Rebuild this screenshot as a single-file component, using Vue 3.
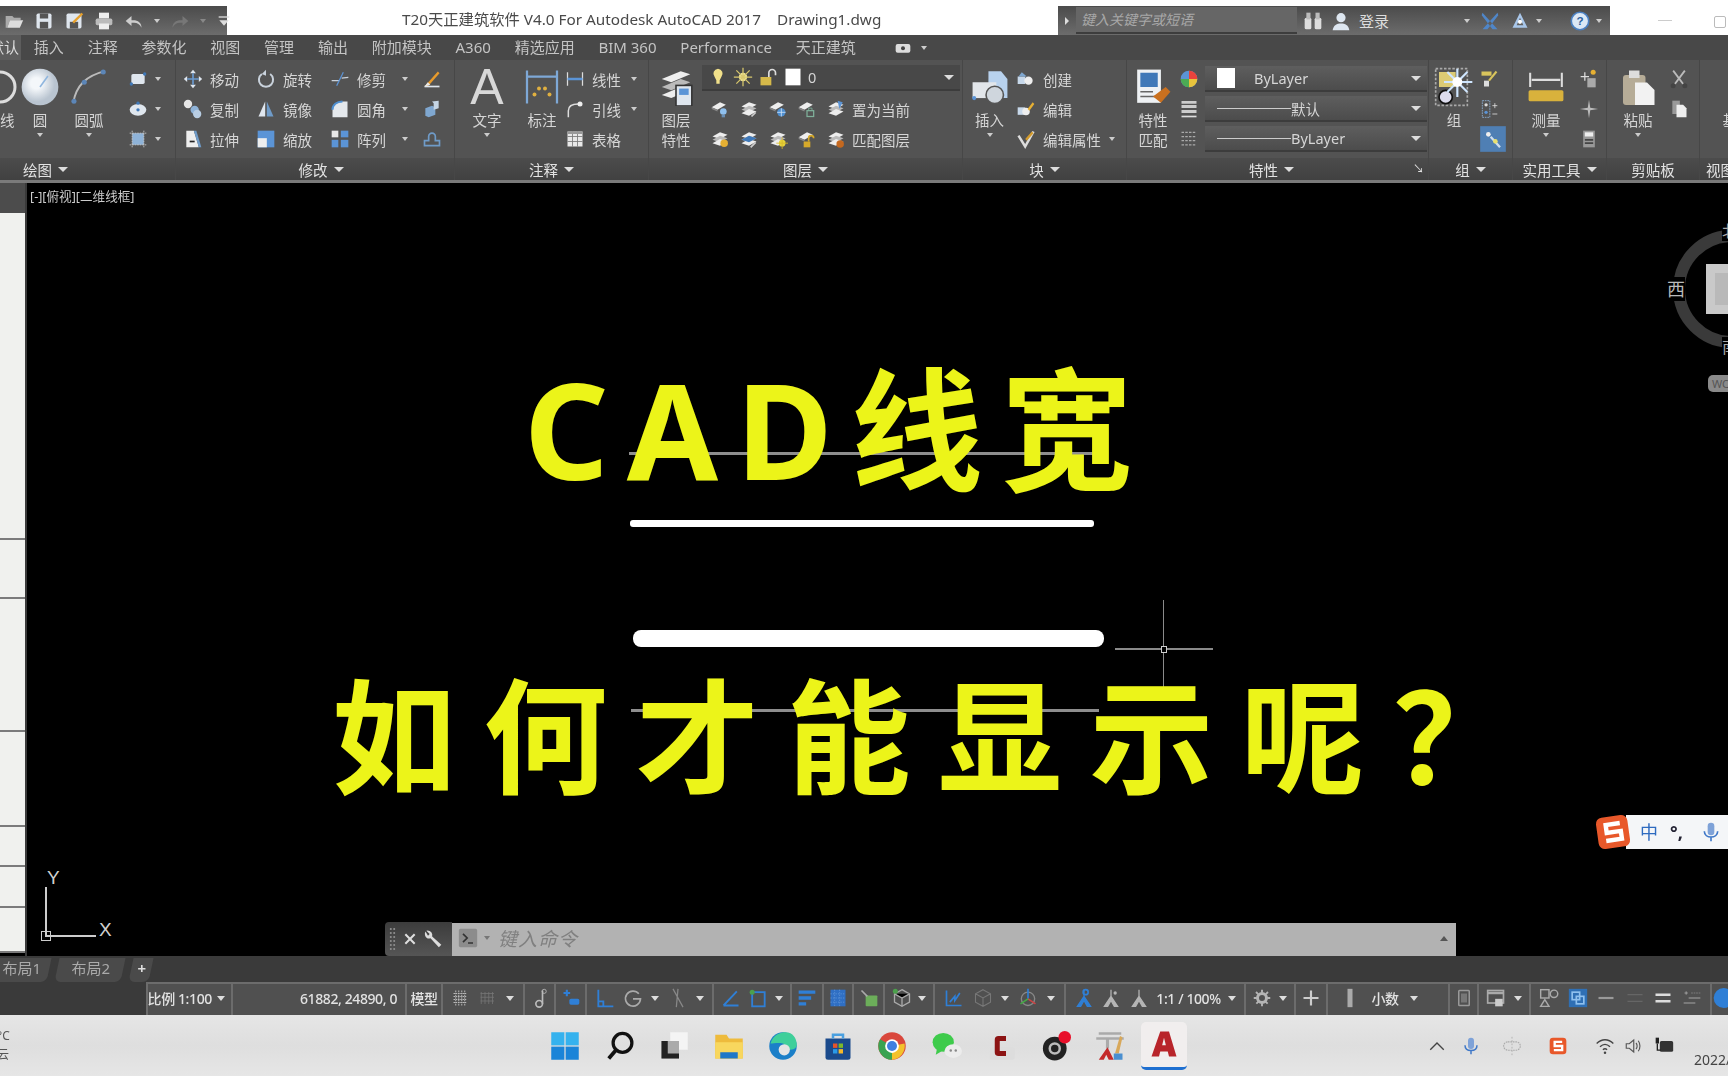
<script setup>
// shared svg fragments, all on a 24x24 box
const stack = '<path d="M3 9l9-5 9 3-9 5z" fill="#eee"/><path d="M3 13l9-5 9 3-9 5z" fill="#bbb"/><path d="M3 17l9-5 9 3-9 5z" fill="#eee"/>'
const plate = '<path d="M2 10l10-6 7 3-10 6z" fill="#eee"/><path d="M2 10l7 3v2l-7-3z" fill="#888"/>'
const icons = {
  ring: '<circle cx="12" cy="12" r="10" fill="none" stroke="#ddd" stroke-width="2"/>',
  circle: '<defs><radialGradient id="cg" cx=".4" cy=".4"><stop offset=".3" stop-color="#f4f7fa"/><stop offset="1" stop-color="#b9c4d0"/></radialGradient></defs><circle cx="12" cy="12" r="11.6" fill="url(#cg)"/><path d="M12 12l5-7" stroke="#8fb6de" stroke-width="1"/>',
  arc: '<path d="M2 22C4 11 10 5 22 2" fill="none" stroke="#bbb" stroke-width="1.2"/><circle cx="2.500" cy="21" r="1.600" fill="#5c86b8"/><circle cx="9" cy="9" r="1.600" fill="#5c86b8"/><circle cx="21" cy="2.500" r="1.600" fill="#5c86b8"/>',
  rect: '<rect x="4" y="6" width="16" height="12" rx="2" fill="#dfe6ee"/><circle cx="4" cy="18" r="2" fill="#3f78b8"/><circle cx="20" cy="6" r="2" fill="#3f78b8"/>',
  ellipse: '<ellipse cx="12" cy="13" rx="10" ry="7" fill="#dfe6ee"/><circle cx="12" cy="13" r="2" fill="#3f78b8"/><circle cx="12" cy="5" r="2" fill="#3f78b8"/>',
  hatch: '<rect x="5" y="5" width="14" height="14" fill="#8fb3d8"/><path d="M2 5h20M2 19h20M5 2v20M19 2v20" stroke="#ccc" stroke-dasharray="2 1"/>',
  move: '<path d="M12 1l3.500 4h-7zM12 23l3.500-4h-7zM1 12l4-3.500v7zM23 12l-4-3.500v7z" fill="#dfe6ee"/><path d="M12 5v14M5 12h14" stroke="#6a9ad0" stroke-width="2"/>',
  rotate: '<path d="M17 6a8.500 8.500 0 1 1-10 0" fill="none" stroke="#c9d2dc" stroke-width="2.400"/><path d="M12 1l-5 5 5 2z" fill="#c9d2dc"/>',
  trim: '<path d="M2 14h9M14 11l8-1" stroke="#c9d2dc" stroke-width="1.500"/><path d="M8 20l8-16" stroke="#5b94d6" stroke-width="1.500"/>',
  erase: '<path d="M3 21L19 3l2 2L7 21z" fill="#e89b2c"/><path d="M3 21h18" stroke="#dfe6ee" stroke-width="2"/><path d="M3 21l4-5 3 3z" fill="#e9e9e9"/>',
  copy: '<circle cx="6" cy="6" r="5" fill="#e6e6e6"/><circle cx="14" cy="13" r="5" fill="#8fb3d8"/><circle cx="17" cy="18" r="5" fill="#b8cde3"/>',
  mirror: '<path d="M11 3v18H3z" fill="#dfe6ee"/><path d="M13 3v18h8z" fill="#6f9bc8"/>',
  fillet: '<path d="M3 22V13C3 7 8 3 15 3h6v19z" fill="#e4e8ec"/><path d="M3 13C3 7 8 3 15 3" fill="none" stroke="#4f8fd0" stroke-width="2.500"/>',
  solid: '<path d="M4 11l8-3 4 2v9l-8 3-4-2z" fill="#7fa7d0"/><path d="M12 3l8-1v9l-6 2V5z" fill="#c6d6e6"/>',
  stretch: '<path d="M4 2h9l6 20H4z" fill="#eee"/><path d="M13 2l6 20h3L16 2z" fill="#6f9bc8"/><path d="M8 15h6" stroke="#222" stroke-width="2"/>',
  scale: '<rect x="2" y="2" width="20" height="20" fill="#5b94d6"/><rect x="2" y="11" width="11" height="11" fill="#eee"/>',
  array: '<rect x="2" y="2" width="8" height="8" fill="#e8e8e8"/><rect x="13" y="2" width="9" height="8" fill="#5b94d6"/><rect x="2" y="13" width="8" height="9" fill="#5b94d6"/><rect x="13" y="13" width="9" height="9" fill="#5b94d6"/>',
  offset: '<path d="M3 20v-6h5V9a4 4 0 0 1 8 0v5h5v6z" fill="none" stroke="#6f9bc8" stroke-width="2"/>',
  dim: '<path d="M2 1v22M22 1v22M2 5h20" stroke="#7ea8d6" stroke-width="1.500"/><circle cx="7" cy="17" r="1.300" fill="#e0b040"/><circle cx="10" cy="13" r="1.300" fill="#e0b040"/><circle cx="14" cy="13" r="1.300" fill="#e0b040"/><circle cx="17" cy="17" r="1.300" fill="#e0b040"/>',
  linear: '<path d="M3 4v16M21 4v16" stroke="#ddd" stroke-width="1.500"/><path d="M3 12h18" stroke="#5b94d6" stroke-width="3"/>',
  leader: '<path d="M4 22V14C4 8 10 6 16 6" fill="none" stroke="#ddd" stroke-width="1.800"/><circle cx="18" cy="6" r="3" fill="#eee"/>',
  table: '<rect x="3" y="3" width="18" height="18" fill="#e8e8e8"/><path d="M3 9h18M3 15h18M9 3v18M15 3v18" stroke="#777"/><rect x="3" y="3" width="18" height="3" fill="#999"/>',
  layers: '<path d="M3 7l12-5 6 2-12 5z" fill="#eee"/><path d="M3 12l12-5 6 2-12 5z" fill="#bbb"/><path d="M3 17l12-5 6 2-12 5z" fill="#eee"/><rect x="12" y="11" width="10" height="13" fill="#dfe6ee" stroke="#333"/><rect x="14" y="13" width="6" height="4" fill="#5b94d6"/>',
  bulb: '<path d="M12 2a6 6 0 0 1 4 10l-2 4v4h-4v-4l-2-4A6 6 0 0 1 12 2z" fill="#f1e08a"/>',
  sun: '<circle cx="12" cy="12" r="5" fill="#efe49a"/><path d="M12 1v22M1 12h22M4 4l16 16M20 4L4 20" stroke="#d8c76c" stroke-width="1.500"/>',
  lock: '<rect x="3" y="12" width="13" height="10" fill="#d6b94a"/><path d="M13 12V7a4 4 0 0 1 8 0v3" fill="none" stroke="#ddd" stroke-width="2"/>',
  swatch: '<rect x="3" y="2" width="18" height="20" fill="#fff"/>',
  l1: plate + '<circle cx="16" cy="15" r="4" fill="#8fc0ee"/><rect x="14" y="19" width="4" height="3" fill="#6a8fb5"/>',
  l2: stack + '<path d="M15 21l5-5" stroke="#ccc" stroke-width="2"/>',
  l3: plate + '<circle cx="16" cy="16" r="5" fill="#4f8fd0"/><path d="M11 16h10M16 11v10" stroke="#cfe2f5"/>',
  l4: plate + '<rect x="12" y="14" width="8" height="7" fill="none" stroke="#7fb09a" stroke-width="1.500"/><path d="M14 14v-3h4v3" fill="none" stroke="#7fb09a"/>',
  l5: stack + '<path d="M14 2l6 2-4 8z" fill="#5b94d6"/>',
  l6: stack + '<circle cx="17" cy="17" r="4.500" fill="#e6b033"/>',
  l7: stack + '<path d="M14 22l6-6" stroke="#ccc" stroke-width="2"/><path d="M3 13l9-5 9 3-9 5z" fill="#3f78b8"/>',
  l8: stack + '<circle cx="17" cy="17" r="4" fill="#e6d33a"/><path d="M17 10v14M10 17h14" stroke="#d6b92a"/>',
  l9: plate + '<rect x="8" y="15" width="8" height="7" fill="#d6a92a"/><path d="M14 15v-4a3 3 0 0 1 6 0" fill="none" stroke="#d6a92a" stroke-width="2"/>',
  l10: stack + '<circle cx="17" cy="18" r="4.500" fill="#c4681f"/>',
  insert: '<path d="M11 2h8l4 5v12h-12z" fill="#b8d2ee"/><rect x="1" y="9" width="15" height="10" fill="#e2e6ea"/><circle cx="15" cy="17" r="5.500" fill="#cfd6dd" stroke="#555"/><circle cx="2" cy="19" r="1.300" fill="#5b94d6"/>',
  create: '<rect x="2" y="9" width="9" height="9" fill="#c7d8ea"/><circle cx="15" cy="14" r="5" fill="#eee"/><path d="M7 4l6 5H3z" fill="#7fa7d0"/>',
  edit: '<rect x="2" y="10" width="9" height="9" fill="#c7d8ea"/><circle cx="12" cy="15" r="4.500" fill="#eee"/><path d="M14 12l6-8 2 2-6 8z" fill="#e6b033"/>',
  attr: '<path d="M3 8l8 13L21 3" fill="none" stroke="#ddd" stroke-width="3"/><path d="M11 12l8-9 2 2-8 9z" fill="#d29a2c"/>',
  match: '<rect x="2" y="1" width="15" height="21" fill="#eef1f4"/><rect x="4" y="3" width="11" height="9" fill="#3f78b8"/><path d="M4 15h8M4 18h10" stroke="#666"/><path d="M12 18l8-6 3 3-6 7z" fill="#c9701f"/>',
  wheel: '<circle cx="12" cy="12" r="10" fill="#5b94d6"/><path d="M12 12V2a10 10 0 0 1 10 10z" fill="#e8433c"/><path d="M12 12h10a10 10 0 0 1-10 10z" fill="#e8c33c"/><path d="M12 12v10A10 10 0 0 1 2 12z" fill="#4cab54"/>',
  lw: '<path d="M3 4h18M3 9h18M3 15h18" stroke="#ccc" stroke-width="3.500"/><path d="M3 21h18" stroke="#ddd" stroke-width="2"/>',
  lt: '<path d="M3 4h18M3 9h18M3 14h18M3 19h18" stroke="#aaa" stroke-width="1.500" stroke-dasharray="3 1.500"/>',
  group: '<rect x="1" y="1" width="19" height="22" fill="none" stroke="#aaa" stroke-dasharray="1.500 1"/><rect x="3" y="3" width="10" height="9" fill="#dccb74"/><circle cx="7" cy="18" r="4" fill="#dde" stroke="#111"/><path d="M14 1v17M6 9h17M8 3l12 12M20 3L8 15" stroke="#cfe6ff" stroke-width="1.300"/><circle cx="14" cy="9" r="3" fill="#fff"/>',
  gedit: '<rect x="3" y="3" width="12" height="5" fill="#d8c45c"/><rect x="6" y="14" width="6" height="7" fill="#ddd"/><path d="M12 14l9-11" stroke="#d8c45c" stroke-width="2.500"/>',
  gsel: '<rect x="4" y="2" width="9" height="20" fill="none" stroke="#8fb3d8" stroke-dasharray="2 1"/><circle cx="8.500" cy="7" r="2" fill="#ddd"/><circle cx="8.500" cy="16" r="2" fill="#5b94d6"/><path d="M16 8h6M19 5v6M16 18h6" stroke="#ddd"/>',
  gbox: '<rect x="1" y="1" width="22" height="22" fill="#4f7fb4"/><circle cx="8" cy="8" r="2" fill="#eee"/><path d="M10 10l8 9" stroke="#cde" stroke-width="2"/><circle cx="14" cy="14" r="2" fill="#e8e070"/>',
  measure: '<path d="M2 3v9M22 3v9M3 7.500h18" stroke="#ddd" stroke-width="1.300"/><rect x="1" y="14" width="22" height="7" rx="1" fill="#d9b23c"/>',
  point: '<path d="M2 9h10M7 4v10" stroke="#ddd" stroke-width="1.500"/><rect x="10" y="11" width="10" height="11" fill="#aaa"/><circle cx="17" cy="4" r="3" fill="#e6b033"/>',
  spark: '<path d="M12 1l1.500 9.500L23 12l-9.500 1.500L12 23l-1.500-9.500L1 12l9.500-1.500z" fill="#bbb"/>',
  calc: '<rect x="5" y="2" width="14" height="20" fill="#999"/><rect x="7" y="4" width="10" height="5" fill="#eee"/><path d="M7 13h10M7 17h10" stroke="#444" stroke-width="2"/>',
  paste: '<rect x="2" y="4" width="15" height="20" rx="2" fill="#b6ac97"/><rect x="6" y="1" width="7" height="5" fill="#ddd"/><path d="M10 9h8l5 5v10H10z" fill="#f2f2f2"/>',
  cut: '<path d="M5 2l12 16M19 2L7 18" stroke="#bbb" stroke-width="2.200"/><circle cx="5" cy="20" r="3" fill="#444"/><circle cx="19" cy="20" r="3" fill="#444"/>',
  clip: '<path d="M4 2h9v16H4z" fill="#999"/><path d="M9 7h8l4 4v11H9z" fill="#eee"/>',
  view: '<rect x="6" y="2" width="18" height="20" fill="#eee"/>',
  open: '<path d="M2 6h8l2 2h8v3H7l-3 9H2z" fill="#aaa"/><path d="M7 11h16l-4 9H4z" fill="#ddd"/>',
  save: '<rect x="3" y="3" width="18" height="18" rx="2" fill="#dfe6ee"/><rect x="7" y="3" width="10" height="6" fill="#555"/><rect x="7" y="13" width="10" height="8" fill="#555"/>',
  saveas: '<rect x="3" y="3" width="18" height="18" rx="2" fill="#dfe6ee"/><rect x="7" y="13" width="10" height="8" fill="#555"/><path d="M10 13L21 2l2 2-11 11z" fill="#e6a02c"/>',
  print: '<rect x="6" y="2" width="12" height="7" fill="#eee"/><rect x="2" y="9" width="20" height="8" rx="2" fill="#bbb"/><rect x="6" y="15" width="12" height="7" fill="#eee"/>',
  undo: '<path d="M21 20c0-6-4-9-10-9H9V6L2 12l7 6v-4h3c4 0 7 2 9 6z" fill="#ccc"/>',
  redo: '<path d="M3 20c0-6 4-9 10-9h2V6l7 6-7 6v-4h-3c-4 0-7 2-9 6z" fill="#777"/>',
  more: '<path d="M4 6h16" stroke="#ddd" stroke-width="2"/><path d="M5 11h14l-7 8z" fill="#ddd"/>',
  binoc: '<rect x="2" y="8" width="8" height="14" rx="2" fill="#ddd"/><rect x="14" y="8" width="8" height="14" rx="2" fill="#ddd"/><rect x="4" y="2" width="5" height="8" fill="#bbb"/><rect x="15" y="2" width="5" height="8" fill="#bbb"/>',
  user: '<circle cx="12" cy="8" r="5.500" fill="#dde6f0"/><path d="M2 23c1-6 5-8 10-8s9 2 10 8z" fill="#dde6f0"/>',
  xchange: '<path d="M3 2l18 20h-6L2 5zM21 2L3 22h6L22 5z" fill="#4f86c8"/>',
  a360: '<path d="M12 2L3 20h18zM12 8l-4 9h8z" fill-rule="evenodd" fill="#a9c7ea"/><circle cx="12" cy="13" r="2.500" fill="#fff"/>',
  help: '<circle cx="12" cy="12" r="10.500" fill="#dbe8f6" stroke="#4a7fc0" stroke-width="2"/><text x="12" y="17" font-size="14" font-weight="700" text-anchor="middle" fill="#2c5f9e" font-family="Liberation Sans">?</text>',
  cam: '<rect x="1" y="6" width="22" height="13" rx="3" fill="#ddd"/><circle cx="12" cy="12.500" r="3" fill="#444"/>',
  term: '<rect x="1" y="1" width="22" height="22" rx="2" fill="#8c8c8c"/><path d="M6 7l5 5-5 5M12 18h6" fill="none" stroke="#333" stroke-width="2"/>',
  wrench: '<path d="M3 3a6 6 0 0 0 2 8 6 6 0 0 0 4 0l10 11 3-3L11 9a6 6 0 0 0-1-5A6 6 0 0 0 4 2l4 4-2 2z" fill="#ddd"/>',
  close: '<path d="M4 4l16 16M20 4L4 20" stroke="#ddd" stroke-width="3.500"/>',
  // status bar
  sgrid: '<path d="M5 2v20M9 2v20M13 2v20M17 2v20M2 6h18M2 10h18M2 14h18M2 18h18" stroke="#bbb" stroke-width="1.300" stroke-dasharray="2 1"/>',
  sdots: '<path d="M3 4v16M8 4v16M13 4v16M18 4v16M2 6h18M2 11h18M2 16h18" stroke="#777" stroke-width="1"/>',
  snote: '<path d="M15 3v16" stroke="#bbb" stroke-width="2"/><circle cx="11" cy="19" r="4" fill="none" stroke="#bbb" stroke-width="2"/><circle cx="17" cy="4" r="2.500" fill="none" stroke="#bbb"/>',
  sinfer: '<rect x="10" y="13" width="12" height="7" rx="2" fill="#2f7fd6"/><path d="M3 6h8M7 2v8" stroke="#2f7fd6" stroke-width="2.500"/>',
  sortho: '<path d="M4 2v20h18M4 16h6v6" fill="none" stroke="#2f7fd6" stroke-width="2.200"/>',
  spolar: '<path d="M19 7a9 9 0 1 0 2 6h-9" fill="none" stroke="#aaa" stroke-width="2"/>',
  scross: '<path d="M6 1l12 22M12 1l-2 22" stroke="#888" stroke-width="1.500"/>',
  sangle: '<path d="M3 21h18M3 21L19 4" fill="none" stroke="#2f7fd6" stroke-width="2.200"/>',
  srect: '<rect x="5" y="5" width="15" height="17" fill="none" stroke="#2f7fd6" stroke-width="2.200"/><circle cx="5" cy="5" r="3" fill="#4ca04c"/>',
  slines: '<path d="M2 5h20M2 12h15M2 19h9" stroke="#2f7fd6" stroke-width="4"/>',
  shatch: '<rect x="3" y="2" width="18" height="20" fill="#2f6fc4"/><path d="M3 7h18M3 12h18M3 17h18M8 2v20M14 2v20" stroke="#5f95d8" stroke-dasharray="1.500 1.500"/>',
  sgreen: '<rect x="8" y="9" width="14" height="13" rx="1" fill="#6cae5a"/><path d="M3 3l7 7" stroke="#aaa" stroke-width="2"/>',
  s3d: '<path d="M12 2l9 5v10l-9 5-9-5V7z" fill="none" stroke="#aaa" stroke-width="1.600"/><path d="M3 7l9 5 9-5M12 12v10" stroke="#aaa" stroke-width="1.600"/><circle cx="4" cy="4" r="3" fill="#4ca04c"/>',
  saxis: '<path d="M3 3v18h18" fill="none" stroke="#2f7fd6" stroke-width="2"/><path d="M7 17l6-7v5l6-9" fill="none" stroke="#2f7fd6" stroke-width="2"/>',
  scube: '<path d="M12 2l9 5v10l-9 5-9-5V7zM3 7l9 5 9-5M12 12v10" fill="none" stroke="#777" stroke-width="1.300"/>',
  sgizmo: '<circle cx="12" cy="13" r="8" fill="none" stroke="#888" stroke-width="1.600"/><path d="M12 13V1" stroke="#2f7fd6" stroke-width="2"/><path d="M12 13l9 6" stroke="#c44" stroke-width="2"/><path d="M12 13l-9 6" stroke="#4a4" stroke-width="2"/>',
  sman: '<path d="M12 10L4 22h4l4-7 4 7h4zM12 2v9" fill="#2f7fd6" stroke="#2f7fd6" stroke-width="1.500"/><circle cx="14" cy="5" r="3" fill="none" stroke="#2f7fd6" stroke-width="2"/>',
  sman2: '<path d="M12 10L4 22h4l4-7 4 7h4zM12 2v9" fill="#b5b5b5" stroke="#b5b5b5" stroke-width="1.500"/><circle cx="17" cy="6" r="2" fill="#b5b5b5"/>',
  sman3: '<path d="M12 10L4 22h4l4-7 4 7h4zM12 2v9" fill="#b5b5b5" stroke="#b5b5b5" stroke-width="1.500"/>',
  sgear: '<circle cx="12" cy="12" r="6" fill="none" stroke="#b5b5b5" stroke-width="4"/><path d="M12 1v22M1 12h22M4 4l16 16M20 4L4 20" stroke="#b5b5b5" stroke-width="2.500" stroke-dasharray="4 14"/>',
  splus: '<path d="M12 3v18M3 12h18" stroke="#ccc" stroke-width="2.600"/>',
  sbar: '<rect x="9" y="1" width="6" height="22" fill="#aaa"/>',
  scalc: '<rect x="5" y="2" width="14" height="20" rx="1" fill="none" stroke="#999" stroke-width="2"/><rect x="8" y="6" width="8" height="12" fill="#777"/>',
  sscreen: '<rect x="2" y="3" width="19" height="15" fill="none" stroke="#aaa" stroke-width="2"/><path d="M2 6h19" stroke="#aaa" stroke-width="3"/><rect x="11" y="13" width="9" height="9" fill="#ccc"/>',
  sshape: '<rect x="2" y="2" width="10" height="10" fill="none" stroke="#aaa" stroke-width="1.700"/><circle cx="18" cy="7" r="4.500" fill="none" stroke="#aaa" stroke-width="1.700"/><path d="M7 14l5 8H2z" fill="none" stroke="#aaa" stroke-width="1.700"/>',
  sblue: '<rect x="1" y="1" width="22" height="22" fill="#2f6fb4"/><rect x="5" y="5" width="9" height="9" fill="none" stroke="#8fc0ee" stroke-width="2"/><rect x="10" y="10" width="9" height="9" fill="none" stroke="#8fc0ee" stroke-width="2"/>',
  seq: '<path d="M3 12h18" stroke="#999" stroke-width="2.600"/>',
  seq2: '<path d="M3 8h18M3 16h18" stroke="#666" stroke-width="1.600"/>',
  seq3: '<path d="M3 8h18M3 16h18" stroke="#ddd" stroke-width="3"/>',
  slist: '<path d="M8 12h14M2 18h14" stroke="#888" stroke-width="2"/><path d="M3 6h4M5 4v4" stroke="#aaa"/><path d="M11 6h11" stroke="#888" stroke-dasharray="2 1"/>',
  sround: '<circle cx="14" cy="12" r="12" fill="#2f7fd6"/>',
  // taskbar
  win: '<rect x="1" y="1" width="10.500" height="10.500" fill="#35b2ee"/><rect x="12.500" y="1" width="10.500" height="10.500" fill="#35b2ee"/><rect x="1" y="12.500" width="10.500" height="10.500" fill="#1a84d8"/><rect x="12.500" y="12.500" width="10.500" height="10.500" fill="#1a84d8"/>',
  search: '<circle cx="14" cy="9.500" r="7.500" fill="none" stroke="#111" stroke-width="2.600"/><path d="M9 15l-6 7" stroke="#111" stroke-width="3"/>',
  tasks: '<rect x="9" y="1" width="14" height="14" fill="#f4f4f4"/><rect x="2" y="8" width="14" height="14" fill="#aaa"/><path d="M2 8v14h14v-4H7V8z" fill="#222"/>',
  folder: '<path d="M1 3h9l2 3h11v16H1z" fill="#eebb3c"/><path d="M1 9h22v13H1z" fill="#f8d75e"/><rect x="5" y="17" width="14" height="5" fill="#1f78c8"/>',
  edge: '<circle cx="12" cy="12" r="11" fill="#1b7fc8"/><path d="M2 10C4 3 10 1 14 1c6 0 9 5 9 10 0 3-3 4-6 4-4 0-2-4-5-5-3-1-8 0-10 0z" fill="#3fcf9a"/><circle cx="13" cy="15" r="4.500" fill="#e4e4e4"/>',
  store: '<path d="M2 6h20v15a2 2 0 0 1-2 2H4a2 2 0 0 1-2-2z" fill="#1a4a8c"/><path d="M8 6V3h8v3" fill="none" stroke="#4aa0e0" stroke-width="2"/><rect x="8" y="10" width="3.500" height="3.500" fill="#e8542a"/><rect x="12.500" y="10" width="3.500" height="3.500" fill="#7cba2a"/><rect x="8" y="14.500" width="3.500" height="3.500" fill="#2a9ae8"/><rect x="12.500" y="14.500" width="3.500" height="3.500" fill="#f4b82a"/>',
  chrome: '<circle cx="12" cy="12" r="11" fill="#d9473c"/><path d="M12 12L2.500 6.500A11 11 0 0 0 12 23z" fill="#3aa351"/><path d="M12 12l10-2a11 11 0 0 1-10 13z" fill="#f3c22c"/><circle cx="12" cy="12" r="5.500" fill="#fff"/><circle cx="12" cy="12" r="4" fill="#3e7fe0"/>',
  wechat: '<ellipse cx="9" cy="9" rx="8.500" ry="7.500" fill="#3ecb4b"/><path d="M4 14l-1 5 5-3z" fill="#3ecb4b"/><ellipse cx="17" cy="16" rx="7" ry="5.500" fill="#ececec"/><circle cx="15" cy="15.500" r="1" fill="#888"/><circle cx="19" cy="15.500" r="1" fill="#888"/>',
  cs: '<rect x="3" y="13" width="20" height="10" rx="2" fill="#ddd"/><path d="M16 4h-6a3 3 0 0 0-3 3v10a3 3 0 0 0 3 3h6v-4h-5V8h5z" fill="#8c1414"/>',
  obs: '<circle cx="11" cy="14" r="9.500" fill="#222"/><circle cx="11" cy="14" r="4" fill="none" stroke="#bbb" stroke-width="2"/><circle cx="19" cy="5" r="5" fill="#e8102a"/>',
  t20: '<path d="M3 2h18M1 6h22" stroke="#aaa" stroke-width="2"/><path d="M10 6v8" stroke="#aaa" stroke-width="2.500"/><path d="M3 23l7-10 5 10h-4l-2-4-2 4z" fill="#c42a2a"/><path d="M16 18l4-14 2 1-3 13z" fill="#d8a85a"/><rect x="15" y="18" width="7" height="5" fill="#4a8fd0"/>',
  acad: '<path d="M9 2h7l6 20h-6l-1-4H9l-1 4H2zM10.500 13h3L12 7z" fill="#b8242a" fill-rule="evenodd"/>',
  caretup: '<path d="M3 17l9-9 9 9" fill="none" stroke="#444" stroke-width="1.800"/>',
  mic: '<rect x="8" y="1" width="8" height="15" rx="4" fill="#7ea2d8"/><path d="M4 11c0 5 4 7 8 7s8-2 8-7M12 18v5" fill="none" stroke="#3f78c8" stroke-width="2"/>',
  ime: '<rect x="2" y="7" width="20" height="10" rx="5" fill="none" stroke="#aaa" stroke-width="1.300" stroke-dasharray="2 1"/><path d="M12 1v22" stroke="#aaa" stroke-dasharray="2 2"/>',
  sogou: '<rect x="2" y="2" width="20" height="20" rx="4" fill="#e8582a"/><path d="M17 7H8v5h9v5H7" fill="none" stroke="#fff" stroke-width="2.800"/>',
  wifi: '<path d="M2 9c6-6 14-6 20 0M6 13c4-4 8-4 12 0M9.500 16.500c2-2 3-2 5 0" fill="none" stroke="#444" stroke-width="1.600"/><circle cx="12" cy="20" r="1.500" fill="#444"/>',
  vol: '<path d="M3 9h4l6-5v16l-6-5H3z" fill="none" stroke="#555" stroke-width="1.500"/><path d="M16 8c2 2 2 6 0 8M19 5c3 4 3 10 0 14" fill="none" stroke="#555" stroke-width="1.500"/>',
  batt: '<rect x="7" y="6" width="16" height="13" rx="2" fill="#333"/><rect x="2" y="2" width="4" height="7" fill="#222"/><path d="M4 9v8h4" fill="none" stroke="#222" stroke-width="1.600"/>',
}

const rowsModify = [
  { icon: 'move', label: '移动' }, { icon: 'rotate', label: '旋转' }, { icon: 'trim', label: '修剪', caret: true }, { icon: 'erase' },
  { icon: 'copy', label: '复制' }, { icon: 'mirror', label: '镜像' }, { icon: 'fillet', label: '圆角', caret: true }, { icon: 'solid' },
  { icon: 'stretch', label: '拉伸' }, { icon: 'scale', label: '缩放' }, { icon: 'array', label: '阵列', caret: true }, { icon: 'offset' },
]
const layerRows = [
  ['l1', 'l2', 'l3', 'l4', 'l5', '置为当前'],
  ['l6', 'l7', 'l8', 'l9', 'l10', '匹配图层'],
]
const statusGroups = [
  { w: 31, items: ['snote'] },
  { w: 31, items: ['sinfer'] },
  { w: 127, items: ['sortho', 'spolar', '^', 'scross', '^'] },
  { w: 78, items: ['sangle', 'srect', '^'] },
  { w: 32, items: ['slines'] },
  { w: 30, items: ['shatch'] },
  { w: 31, items: ['sgreen'] },
  { w: 50, items: ['s3d', '^'] },
  { w: 131, items: ['saxis', 'scube', '^', 'sgizmo', '^'] },
]
const tabs = ['插入', '注释', '参数化', '视图', '管理', '输出', '附加模块', 'A360', '精选应用', 'BIM 360', 'Performance', '天正建筑']
const dock = ['win', 'search', 'tasks', 'folder', 'edge', 'store', 'chrome', 'wechat', 'cs', 'obs', 't20']
const stripLines = [327, 59, 133, 95, 40, 41, 45]
</script>

<template>
  <div class="screen">
    <header class="titlebar">
      <div class="qat">
        <svg v-for="n in ['open', 'save', 'saveas', 'print', 'undo']" :key="n" class="i20" viewBox="0 0 24 24" v-html="icons[n]" />
        <i class="caret" />
        <svg class="i20" viewBox="0 0 24 24" v-html="icons.redo" />
        <i class="caret dim" />
        <svg class="i16" viewBox="0 0 24 24" v-html="icons.more" />
      </div>
      <div class="doc-title">T20天正建筑软件 V4.0 For Autodesk AutoCAD 2017&nbsp;&nbsp;&nbsp;&nbsp;Drawing1.dwg</div>
      <div class="infocenter">
        <span class="search-arrow" />
        <div class="search-box">键入关键字或短语</div>
        <svg class="i20" viewBox="0 0 24 24" v-html="icons.binoc" />
        <svg class="i20 ml8" viewBox="0 0 24 24" v-html="icons.user" />
        <span class="login">登录</span>
        <i class="caret" />
        <svg class="i20 ml10" viewBox="0 0 24 24" v-html="icons.xchange" />
        <svg class="i20 ml10" viewBox="0 0 24 24" v-html="icons.a360" />
        <i class="caret" />
        <svg class="i20 help" viewBox="0 0 24 24" v-html="icons.help" />
        <i class="caret" />
      </div>
      <div class="winctl"><span class="min" /><span class="restore" /></div>
    </header>

    <nav class="tabs">
      <span class="tab active">默认</span>
      <span v-for="t in tabs" :key="t" class="tab">{{ t }}</span>
      <svg class="i16 cam" viewBox="0 0 24 24" v-html="icons.cam" />
      <i class="caret" />
    </nav>

    <section class="ribbon">
      <div class="panel" style="width: 176px">
        <div class="body">
          <div class="big cut" style="width: 26px">
            <div class="bigicon"><svg width="36" height="36" viewBox="0 0 24 24" v-html="icons.ring" /></div>
            <span>直线</span>
          </div>
          <div class="big gap-left" style="width: 40px">
            <div class="bigicon"><svg width="38" height="38" viewBox="0 0 24 24" v-html="icons.circle" /></div>
            <span>圆</span><i class="caret" />
          </div>
          <div class="big" style="width: 58px">
            <div class="bigicon"><svg width="38" height="38" viewBox="0 0 24 24" v-html="icons.arc" /></div>
            <span>圆弧</span><i class="caret" />
          </div>
          <div class="rows draw-tools">
            <div v-for="n in ['rect', 'ellipse', 'hatch']" :key="n" class="row">
              <svg class="i20" viewBox="0 0 24 24" v-html="icons[n]" /><i class="caret" />
            </div>
          </div>
        </div>
        <div class="label draw-label">绘图 <i class="tri" /></div>
      </div>

      <div class="panel" style="width: 279px">
        <div class="body">
          <div class="modify">
            <div v-for="(r, i) in rowsModify" :key="i" class="row">
              <svg class="i20" viewBox="0 0 24 24" v-html="icons[r.icon]" />
              <span v-if="r.label">{{ r.label }}</span>
              <i v-if="r.caret" class="caret push" />
            </div>
          </div>
        </div>
        <div class="label nudge-right">修改 <i class="tri" /></div>
      </div>

      <div class="panel" style="width: 194px">
        <div class="body">
          <div class="big" style="width: 64px">
            <div class="bigicon letter-a">A</div>
            <span>文字</span><i class="caret" />
          </div>
          <div class="big" style="width: 46px">
            <div class="bigicon"><svg width="36" height="38" viewBox="0 0 24 24" v-html="icons.dim" /></div>
            <span>标注</span>
          </div>
          <div class="rows" style="width: 80px">
            <div class="row"><svg class="i20" viewBox="0 0 24 24" v-html="icons.linear" /><span>线性</span><i class="caret push" /></div>
            <div class="row"><svg class="i20" viewBox="0 0 24 24" v-html="icons.leader" /><span>引线</span><i class="caret push" /></div>
            <div class="row"><svg class="i20" viewBox="0 0 24 24" v-html="icons.table" /><span>表格</span></div>
          </div>
        </div>
        <div class="label">注释 <i class="tri" /></div>
      </div>

      <div class="panel" style="width: 314px">
        <div class="body">
          <div class="big" style="width: 54px">
            <div class="bigicon"><svg width="38" height="38" viewBox="0 0 24 24" v-html="icons.layers" /></div>
            <span>图层</span><span>特性</span>
          </div>
          <div class="layerbox">
            <div class="combo layer-combo">
              <svg class="i20" viewBox="0 0 24 24" v-html="icons.bulb" />
              <svg class="i20" viewBox="0 0 24 24" v-html="icons.sun" />
              <svg class="i20" viewBox="0 0 24 24" v-html="icons.lock" />
              <svg class="i20" viewBox="0 0 24 24" v-html="icons.swatch" />
              <span>0</span>
              <i class="tri push" />
            </div>
            <div v-for="r in layerRows" :key="r[5]" class="layer-row">
              <svg v-for="n in r.slice(0, 5)" :key="n" class="i20" viewBox="0 0 24 24" v-html="icons[n]" />
              <span>{{ r[5] }}</span>
            </div>
          </div>
        </div>
        <div class="label">图层 <i class="tri" /></div>
      </div>

      <div class="panel" style="width: 164px">
        <div class="body">
          <div class="big" style="width: 53px">
            <div class="bigicon"><svg width="38" height="38" viewBox="0 0 24 24" v-html="icons.insert" /></div>
            <span>插入</span><i class="caret" />
          </div>
          <div class="rows" style="width: 107px">
            <div class="row"><svg class="i20" viewBox="0 0 24 24" v-html="icons.create" /><span>创建</span></div>
            <div class="row"><svg class="i20" viewBox="0 0 24 24" v-html="icons.edit" /><span>编辑</span></div>
            <div class="row"><svg class="i20" viewBox="0 0 24 24" v-html="icons.attr" /><span>编辑属性</span><i class="caret push" /></div>
          </div>
        </div>
        <div class="label">块 <i class="tri" /></div>
      </div>

      <div class="panel" style="width: 302px">
        <div class="body">
          <div class="big" style="width: 52px">
            <div class="bigicon"><svg width="38" height="40" viewBox="0 0 24 24" v-html="icons.match" /></div>
            <span>特性</span><span>匹配</span>
          </div>
          <div class="rows" style="width: 24px">
            <div v-for="n in ['wheel', 'lw', 'lt']" :key="n" class="row"><svg class="i20" viewBox="0 0 24 24" v-html="icons[n]" /></div>
          </div>
          <div class="combos">
            <div class="combo"><span class="mini-swatch" /><span>ByLayer</span><i class="tri push" /></div>
            <div class="combo"><span class="dash" /><span>默认</span><i class="tri push" /></div>
            <div class="combo"><span class="dash" /><span>ByLayer</span><i class="tri push" /></div>
          </div>
        </div>
        <div class="label nudge-left">特性 <i class="tri" /><i class="corner">↘</i></div>
      </div>

      <div class="panel" style="width: 84px">
        <div class="body">
          <div class="big" style="width: 50px">
            <div class="bigicon"><svg width="40" height="40" viewBox="0 0 24 24" v-html="icons.group" /></div>
            <span>组</span>
          </div>
          <div class="rows" style="width: 30px">
            <div class="row"><svg class="i20" viewBox="0 0 24 24" v-html="icons.gedit" /></div>
            <div class="row"><svg class="i20" viewBox="0 0 24 24" v-html="icons.gsel" /></div>
            <div class="row"><svg class="i28" viewBox="0 0 24 24" v-html="icons.gbox" /></div>
          </div>
        </div>
        <div class="label">组 <i class="tri" /></div>
      </div>

      <div class="panel" style="width: 94px">
        <div class="body">
          <div class="big" style="width: 66px">
            <div class="bigicon"><svg width="40" height="38" viewBox="0 0 24 24" v-html="icons.measure" /></div>
            <span>测量</span><i class="caret" />
          </div>
          <div class="rows" style="width: 26px">
            <div v-for="n in ['point', 'spark', 'calc']" :key="n" class="row"><svg class="i20" viewBox="0 0 24 24" v-html="icons[n]" /></div>
          </div>
        </div>
        <div class="label">实用工具 <i class="tri" /></div>
      </div>

      <div class="panel" style="width: 93px">
        <div class="body">
          <div class="big" style="width: 62px">
            <div class="bigicon"><svg width="36" height="40" viewBox="0 0 24 24" v-html="icons.paste" /></div>
            <span>粘贴</span><i class="caret" />
          </div>
          <div class="rows" style="width: 26px">
            <div class="row"><svg class="i20" viewBox="0 0 24 24" v-html="icons.cut" /></div>
            <div class="row"><svg class="i20" viewBox="0 0 24 24" v-html="icons.clip" /></div>
          </div>
        </div>
        <div class="label">剪贴板</div>
      </div>

      <div class="panel last">
        <div class="body">
          <div class="big base-point" style="width: 42px">
            <div class="bigicon"><svg width="34" height="38" viewBox="0 0 24 24" v-html="icons.view" /></div>
            <span>基点</span>
          </div>
        </div>
        <div class="label left">视图</div>
      </div>
    </section>

    <main class="canvas">
      <aside class="palette">
        <div class="palette-head" />
        <div v-for="(h, i) in stripLines" :key="i" class="palette-cell" :style="{ height: h + 'px' }" />
      </aside>

      <span class="viewlabel">[-][俯视][二维线框]</span>

      <span class="ln grey" style="left: 629px; top: 269px; width: 465px" />
      <span class="ln white" style="left: 630px; top: 337px; width: 464px" />
      <span class="ln thick" style="left: 633px; top: 447px; width: 471px" />
      <span class="ln grey" style="left: 631px; top: 526px; width: 468px" />

      <div class="crosshair"><span class="cross-h" /><span class="cross-v" /><span class="cross-box" /></div>

      <h1 class="headline one">CAD线宽</h1>
      <h1 class="headline two">如何才能显示呢？</h1>

      <div class="ucs">
        <span class="ucs-y">Y</span><span class="ucs-x">X</span>
        <span class="axis-v" /><span class="axis-h" /><span class="origin" />
      </div>

      <div class="viewcube">
        <span class="vc-ring" />
        <span class="vc-cube" />
        <span class="vc-west">西</span>
        <span class="vc-south">南</span>
        <span class="vc-north">北</span>
        <span class="vc-wcs">WCS</span>
      </div>

      <div class="ime-bar">
        <svg class="ime-logo" viewBox="0 0 24 24" v-html="icons.sogou" />
        <span class="ime-zh">中</span>
        <span class="ime-dot">°,</span>
        <svg class="i20" viewBox="0 0 24 24" v-html="icons.mic" />
      </div>

      <div class="cmdline">
        <div class="cmd-grip">
          <span class="grip" />
          <svg class="i14" viewBox="0 0 24 24" v-html="icons.close" />
          <svg class="i20" viewBox="0 0 24 24" v-html="icons.wrench" />
        </div>
        <div class="cmd-input">
          <svg class="i20" viewBox="0 0 24 24" v-html="icons.term" />
          <i class="caret grey" />
          <em>键入命令</em>
          <i class="caret-up" />
        </div>
      </div>
    </main>

    <div class="layouts">
      <span class="ltab"><span>布局1</span></span>
      <span class="ltab"><span>布局2</span></span>
      <span class="ltab add"><span>+</span></span>
    </div>

    <footer class="status">
      <div class="seg" style="width: 85px"><b>比例 1:100</b><i class="tri" /></div>
      <div class="seg end" style="width: 174px"><b>61882, 24890, 0</b></div>
      <div class="seg" style="width: 36px"><b>模型</b></div>
      <div class="seg" style="width: 82px">
        <svg class="i18" viewBox="0 0 24 24" v-html="icons.sgrid" />
        <svg class="i18" viewBox="0 0 24 24" v-html="icons.sdots" />
        <i class="tri" />
      </div>
      <div v-for="(g, i) in statusGroups" :key="i" class="seg" :style="{ width: g.w + 'px' }">
        <template v-for="(n, j) in g.items" :key="j">
          <i v-if="n === '^'" class="tri" />
          <svg v-else class="i20" viewBox="0 0 24 24" v-html="icons[n]" />
        </template>
      </div>
      <div class="seg" style="width: 180px">
        <svg class="i20" viewBox="0 0 24 24" v-html="icons.sman" />
        <svg class="i20" viewBox="0 0 24 24" v-html="icons.sman2" />
        <svg class="i20" viewBox="0 0 24 24" v-html="icons.sman3" />
        <b>1:1 / 100%</b><i class="tri" />
      </div>
      <div class="seg" style="width: 50px"><svg class="i18" viewBox="0 0 24 24" v-html="icons.sgear" /><i class="tri" /></div>
      <div class="seg" style="width: 32px"><svg class="i20" viewBox="0 0 24 24" v-html="icons.splus" /></div>
      <div class="seg units" style="width: 122px"><svg class="i20" viewBox="0 0 24 24" v-html="icons.sbar" /><b>小数</b><i class="tri" /></div>
      <div class="seg" style="width: 29px"><svg class="i18" viewBox="0 0 24 24" v-html="icons.scalc" /></div>
      <div class="seg" style="width: 52px"><svg class="i20" viewBox="0 0 24 24" v-html="icons.sscreen" /><i class="tri" /></div>
      <div class="seg" style="width: 181px">
        <svg v-for="n in ['sshape', 'sblue', 'seq', 'seq2', 'seq3', 'slist']" :key="n" class="i20" viewBox="0 0 24 24" v-html="icons[n]" />
      </div>
      <div class="seg tail"><svg class="i20" viewBox="0 0 24 24" v-html="icons.sround" /></div>
    </footer>

    <div class="taskbar">
      <div class="weather"><span>°C</span><span>云</span></div>
      <div class="dock">
        <svg v-for="n in dock" :key="n" class="i30" viewBox="0 0 24 24" v-html="icons[n]" />
        <div class="dock-active"><svg class="i30" viewBox="0 0 24 24" v-html="icons.acad" /></div>
      </div>
      <div class="tray">
        <svg class="i18" viewBox="0 0 24 24" v-html="icons.caretup" />
        <svg class="i18" viewBox="0 0 24 24" v-html="icons.mic" />
        <svg class="i20" viewBox="0 0 24 24" v-html="icons.ime" />
        <svg class="i20" viewBox="0 0 24 24" v-html="icons.sogou" />
        <svg class="i20" viewBox="0 0 24 24" v-html="icons.wifi" />
        <svg class="i18" viewBox="0 0 24 24" v-html="icons.vol" />
        <svg class="i20" viewBox="0 0 24 24" v-html="icons.batt" />
        <span class="clock">2022/</span>
      </div>
    </div>
  </div>
</template>

<style>
html, body { background: #fff; overflow: hidden; }
</style>

<style scoped>
.screen {
  width: 1728px;
  height: 1080px;
  display: flex;
  flex-direction: column;
  overflow: hidden;
  background: #fff;
  font-family: "Noto Sans", "Noto Sans CJK SC", sans-serif;
  font-size: 14px;
}
svg { display: block; flex: none; }
.i14 { width: 14px; height: 14px; }
.i16 { width: 16px; height: 16px; }
.i18 { width: 18px; height: 18px; }
.i20 { width: 20px; height: 20px; }
.i28 { width: 28px; height: 28px; }
.i30 { width: 30px; height: 30px; }
.ml8 { margin-left: 8px; }
.ml10 { margin-left: 10px; }

.caret {
  flex: none;
  width: 0;
  height: 0;
  border-left: 3px solid transparent;
  border-right: 3px solid transparent;
  border-top: 4px solid #ccc;
}
.caret.dim { border-top-color: #888; }
.caret.grey { border-top-color: #777; }
.tri {
  flex: none;
  display: inline-block;
  width: 0;
  height: 0;
  border-left: 5px solid transparent;
  border-right: 5px solid transparent;
  border-top: 5px solid #ddd;
}
.push { margin-left: auto; }

/* title bar */
.titlebar {
  height: 35px;
  flex: none;
  display: flex;
  background: #fff;
}
.qat {
  width: 227px;
  margin-top: 6px;
  display: flex;
  align-items: center;
  gap: 10px;
  padding-left: 4px;
  box-sizing: border-box;
  background: linear-gradient(#4b4b4b, #6c6c6c);
}
.doc-title {
  width: 831px;
  padding-left: 175px;
  box-sizing: border-box;
  line-height: 38px;
  color: #4a4a4a;
  font-size: 15.300px;
  white-space: nowrap;
  filter: blur(.35px);
}
.infocenter {
  width: 552px;
  margin-top: 6px;
  display: flex;
  align-items: center;
  background: linear-gradient(#4b4b4b, #6c6c6c);
  color: #ddd;
}
.search-arrow {
  width: 0;
  height: 0;
  margin: 0 7px 0 7px;
  border-top: 4px solid transparent;
  border-bottom: 4px solid transparent;
  border-left: 4px solid #ddd;
}
.search-box {
  width: 221px;
  height: 27px;
  margin-right: 6px;
  padding-left: 5px;
  box-sizing: border-box;
  background: #666;
  border-bottom: 2px solid #3d3d3d;
  color: #a8a8a8;
  font-style: italic;
  font-size: 14px;
  line-height: 25px;
  overflow: hidden;
}
.login { margin: 0 69px 0 8px; font-size: 15px; }
.infocenter .caret { margin-left: 6px; }
.help { margin-left: 28px; }
.winctl {
  flex: 1;
  position: relative;
}
.min {
  position: absolute;
  left: 48px;
  top: 20px;
  width: 14px;
  height: 1px;
  background: #ccc;
}
.restore {
  position: absolute;
  left: 104px;
  top: 16px;
  width: 10px;
  height: 10px;
  border: 1px solid #bbb;
  border-radius: 2px;
}

/* tabs */
.tabs {
  height: 25px;
  flex: none;
  display: flex;
  align-items: center;
  gap: 23.800px;
  background: #484848;
  color: #c4c4c4;
  font-size: 15px;
  white-space: nowrap;
  filter: blur(.4px);
}
.tab { line-height: 25px; }
.tab.active {
  margin-left: -19px;
  padding: 0 2px 0 8px;
  margin-right: -11px;
  background: #5d5d5d;
  color: #ddd;
}
.cam { margin-left: 16px; }
.tabs .caret { margin-left: -14px; }

/* ribbon */
.ribbon {
  height: 123px;
  flex: none;
  display: flex;
  background: #535353;
  border-bottom: 3px solid #7a7a7a;
  box-sizing: border-box;
  color: #d6d6d6;
  filter: blur(.4px);
}
.panel {
  flex: none;
  display: flex;
  flex-direction: column;
  box-sizing: border-box;
  border-right: 1px solid #474747;
  overflow: hidden;
}
.panel.last { flex: 1; border-right: 0; }
.body {
  flex: 1;
  display: flex;
  padding-top: 4px;
  min-height: 0;
}
.label {
  height: 22px;
  flex: none;
  display: flex;
  align-items: center;
  justify-content: center;
  gap: 6px;
  position: relative;
  background: linear-gradient(#4c4c4c, #414141);
  font-size: 14.500px;
  color: #e2e2e2;
  white-space: nowrap;
}
.label.left { justify-content: flex-start; padding-left: 6px; }
.draw-label { padding-right: 84px; }
.nudge-right { padding-left: 12px; }
.nudge-left { padding-right: 12px; }
.corner {
  position: absolute;
  right: 4px;
  top: 2px;
  font-style: normal;
  font-size: 11px;
}
.big {
  flex: none;
  display: flex;
  flex-direction: column;
  align-items: center;
  font-size: 14.500px;
  line-height: 20px;
  white-space: nowrap;
}
.big .caret { margin-top: 3px; }
.bigicon {
  height: 46px;
  display: flex;
  align-items: center;
  justify-content: center;
}
.big.cut { margin-left: -13px; }
.big.gap-left { margin-left: 7px; }
.big.base-point { margin-left: 16px; }
.letter-a {
  font-family: "Liberation Sans", sans-serif;
  font-size: 50px;
  line-height: 46px;
  color: #d8d8d8;
}
.rows { flex: none; display: flex; flex-direction: column; }
.draw-tools { width: 46px; padding-left: 10px; box-sizing: border-box; }
.row {
  height: 30px;
  display: flex;
  align-items: center;
  gap: 7px;
  white-space: nowrap;
  font-size: 14.500px;
}
.modify {
  width: 100%;
  padding-left: 7px;
  display: grid;
  grid-template-columns: 73px 74px 92px 26px;
  grid-auto-rows: 30px;
}
.modify .caret.push { margin-right: 14px; }
.rows .caret.push { margin-right: 8px; }

.layerbox { width: 258px; margin-left: -1px; padding-top: 1px; }
.combo {
  height: 26px;
  display: flex;
  align-items: center;
  gap: 10px;
  padding: 0 6px 0 12px;
  box-sizing: border-box;
  background: linear-gradient(#5e5e5e, #4c4c4c);
  border-bottom: 2px solid #3c3c3c;
  white-space: nowrap;
  font-size: 14.500px;
}
.layer-combo { gap: 5px; padding-left: 6px; margin-bottom: 3px; background: #484848; }
.layer-row {
  height: 30px;
  display: flex;
  align-items: center;
  gap: 9px;
  padding-left: 8px;
  font-size: 14.500px;
  white-space: nowrap;
}
.layer-row span { margin-left: -3px; }
.combos {
  width: 222px;
  margin-left: 2px;
  display: flex;
  flex-direction: column;
  gap: 4px;
  margin-top: 2px;
}
.mini-swatch {
  width: 18px;
  height: 20px;
  margin-right: 9px;
  background: #fff;
}
.dash {
  width: 74px;
  height: 1px;
  margin-right: -10px;
  background: #ccc;
}

/* canvas */
.canvas {
  flex: 1;
  position: relative;
  background: #000;
  overflow: hidden;
}
.palette {
  position: absolute;
  left: 0;
  top: 0;
  bottom: 0;
  width: 25px;
  border-right: 2px solid #3a3a3a;
  display: flex;
  flex-direction: column;
}
.palette-head { height: 30px; background: #4c4c4c; }
.palette-cell {
  flex: none;
  box-sizing: border-box;
  background: #f0f1ee;
  border-bottom: 2px solid #7b7b7b;
}
.viewlabel {
  position: absolute;
  left: 30px;
  top: 3px;
  color: #ccc;
  font-size: 12.600px;
  white-space: nowrap;
  filter: blur(.4px);
}
.ln { position: absolute; display: block; }
.ln.grey { height: 3px; background: #8e8e8e; }
.ln.white { height: 7px; background: #fff; border-radius: 3px; }
.ln.thick { height: 17px; background: #fff; border-radius: 8px; }

.crosshair {
  position: absolute;
  left: 1115px;
  top: 417px;
  width: 98px;
  height: 97px;
}
.cross-h, .cross-v, .cross-box { position: absolute; display: block; }
.cross-h { left: 0; right: 0; top: 48px; height: 2px; background: #8a8a8a; }
.cross-v { top: 0; bottom: 0; left: 48px; width: 1px; background: #8a8a8a; }
.cross-box { left: 46px; top: 46px; width: 4px; height: 5px; border: 1px solid #ccc; background: #000; }

.headline {
  position: absolute;
  margin: 0;
  color: #ecf419;
  font-family: "Noto Sans", "Noto Sans CJK SC", sans-serif;
  font-weight: 700;
  line-height: 1;
  white-space: nowrap;
}
.headline.one {
  left: 524px;
  top: 180px;
  font-size: 132px;
  letter-spacing: 18px;
}
.headline.two {
  left: 332px;
  top: 491px;
  font-size: 124px;
  letter-spacing: 27.500px;
}

.ucs { position: absolute; left: 0; top: 0; }
.ucs span { position: absolute; display: block; }
.ucs-y, .ucs-x {
  color: #d0d0d0;
  font-family: "Liberation Sans", sans-serif;
  font-size: 19px;
  line-height: 1;
}
.ucs-y { left: 47px; top: 685px; }
.ucs-x { left: 99px; top: 737px; }
.axis-v { left: 45px; top: 704px; width: 2px; height: 50px; background: #ccc; }
.axis-h { left: 47px; top: 752px; width: 49px; height: 2px; background: #ccc; }
.origin { left: 41px; top: 748px; width: 8px; height: 8px; border: 1px solid #ccc; }

.viewcube { position: absolute; left: 0; top: 0; }
.viewcube span { position: absolute; display: block; }
.vc-ring {
  left: 1673px;
  top: 47px;
  width: 118px;
  height: 118px;
  box-sizing: border-box;
  border: 12px solid #3a3a3a;
  border-radius: 50%;
}
.vc-cube {
  left: 1706px;
  top: 81px;
  width: 60px;
  height: 50px;
  background: #b9b9b9;
  box-shadow: inset 0 0 0 9px #c9c9c9;
}
.vc-west { left: 1667px; top: 94px; color: #bbb; font-size: 18px; line-height: 24px; background: #000; }
.vc-south { left: 1722px; top: 154px; color: #aaa; font-size: 16px; line-height: 20px; background: #000; }
.vc-north { left: 1722px; top: 38px; color: #aaa; font-size: 16px; line-height: 20px; background: #000; }
.vc-wcs {
  left: 1708px;
  top: 192px;
  width: 40px;
  height: 17px;
  padding-left: 4px;
  background: #8a8a8a;
  border-radius: 5px;
  color: #555;
  font-size: 11px;
  line-height: 17px;
}

.ime-bar {
  position: absolute;
  left: 1596px;
  top: 632px;
  width: 140px;
  height: 34px;
  display: flex;
  align-items: center;
  gap: 12px;
  background: linear-gradient(90deg, transparent 30px, #f4f6f8 30px);
  color: #2d6bc0;
  font-size: 18px;
  filter: blur(.3px);
}
.ime-logo { width: 38px; height: 38px; transform: rotate(-8deg); margin-left: -2px; margin-right: -4px; }
.ime-zh { line-height: 34px; }
.ime-dot { font-weight: 700; color: #223; margin-right: 6px; }

.cmdline {
  position: absolute;
  left: 385px;
  top: 739px;
  width: 1071px;
  height: 34px;
  display: flex;
  filter: blur(.3px);
}
.cmd-grip {
  width: 67px;
  flex: none;
  display: flex;
  align-items: center;
  gap: 6px;
  padding-left: 4px;
  box-sizing: border-box;
  background: linear-gradient(#3c3c3c, #555);
  border-radius: 4px 0 0 4px;
}
.grip {
  width: 7px;
  height: 24px;
  margin-right: 1px;
  background-image: radial-gradient(#888 1px, transparent 1.200px);
  background-size: 3.500px 4px;
}
.cmd-input {
  flex: 1;
  display: flex;
  align-items: center;
  gap: 6px;
  padding: 0 8px 3px 6px;
  background: #b2b2b2;
  color: #808080;
  margin-top: 1px;
}
.cmd-input em { margin-left: 2px; font-size: 19px; letter-spacing: 1px; }
.caret-up {
  margin-left: auto;
  width: 0;
  height: 0;
  border-left: 4px solid transparent;
  border-right: 4px solid transparent;
  border-bottom: 5px solid #555;
}

/* layout tabs */
.layouts {
  height: 26px;
  flex: none;
  display: flex;
  align-items: flex-end;
  gap: 8px;
  background: #3a3a3a;
  color: #aaa;
  font-size: 15px;
  filter: blur(.3px);
}
.ltab {
  height: 24px;
  line-height: 20px;
  background: #4a4a4a;
  border-radius: 0 0 6px 6px;
  text-align: center;
  transform: skewX(-12deg);
}
.ltab > span { display: inline-block; transform: skewX(12deg); }
.ltab:first-child { width: 56px; margin-left: -7px; }
.ltab:nth-child(2) { width: 66px; }
.ltab.add { width: 20px; color: #ddd; font-weight: 700; }

/* status bar */
.status {
  height: 33px;
  flex: none;
  display: flex;
  padding-left: 146px;
  background: #3a3a3a;
  color: #e2e2e2;
  font-size: 14px;
  filter: blur(.3px);
}
.seg {
  flex: none;
  display: flex;
  align-items: center;
  justify-content: space-evenly;
  box-sizing: border-box;
  padding-bottom: 3px;
  background: #505050;
  border-left: 2px solid #6c6c6c;
  border-top: 2px solid #6c6c6c;
  white-space: nowrap;
}
.seg b { font-weight: 500; letter-spacing: -.4px; }
.seg:first-child b { margin-left: -6px; }
.seg.end { justify-content: flex-end; padding-right: 8px; }
.seg.units { padding-right: 18px; }
.seg.tail { flex: 1; }
.seg .tri { border-left-width: 4px; border-right-width: 4px; border-top-width: 5px; }

/* taskbar */
.taskbar {
  height: 61px;
  flex: none;
  margin-bottom: 4px;
  display: flex;
  align-items: center;
  position: relative;
  background: linear-gradient(#e6e6e6, #dedede 50%, #e6e6e6);
  filter: blur(.3px);
}
.weather {
  position: absolute;
  left: -3px;
  top: 14px;
  display: flex;
  flex-direction: column;
  gap: 5px;
  color: #555;
  font-size: 12px;
  line-height: 14px;
}
.dock {
  margin-left: 550px;
  display: flex;
  align-items: center;
  gap: 24.500px;
}
.dock-active {
  margin-left: -9px;
  width: 46px;
  height: 48px;
  display: flex;
  align-items: center;
  justify-content: center;
  background: #f1eeee;
  border-radius: 5px;
  border-bottom: 3px solid #1f6fd0;
  box-sizing: border-box;
}
.tray {
  width: 300px;
  margin-left: auto;
  display: flex;
  align-items: center;
}
.tray svg:nth-child(2) { margin-left: 16px; }
.tray svg:nth-child(3) { margin-left: 22px; }
.tray svg:nth-child(4) { margin-left: 26px; }
.tray svg:nth-child(5) { margin-left: 27px; }
.tray svg:nth-child(6) { margin-left: 9px; }
.tray svg:nth-child(7) { margin-left: 12px; }
.clock {
  margin-left: 20px;
  margin-top: 28px;
  color: #444;
  font-size: 14px;
  white-space: nowrap;
}
</style>
